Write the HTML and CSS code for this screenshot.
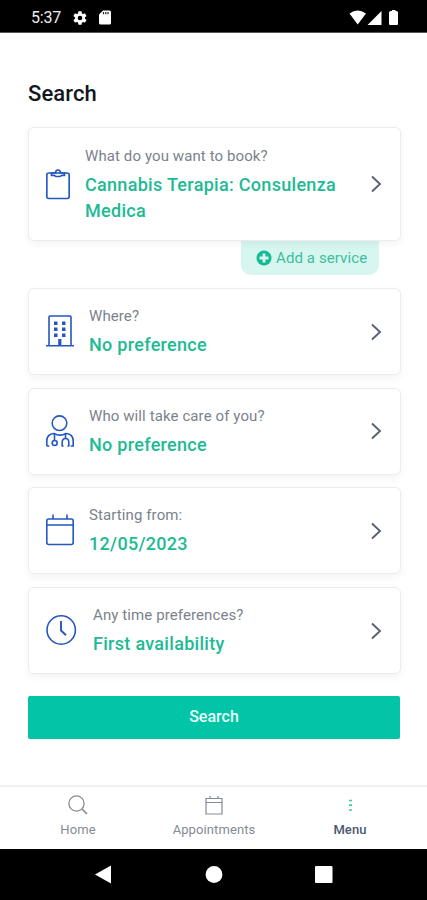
FILE: index.html
```html
<!DOCTYPE html>
<html lang="en">
<head>
<meta charset="utf-8">
<meta name="viewport" content="width=device-width">
<title>Search</title>
<link rel="stylesheet" href="styles.css">
</head>
<body>
<header class="status">
  <span class="time">5:37</span>
  <svg class="gear" width="16" height="16" viewBox="0 0 24 24"><path fill="#fff" d="M19.4 13c.1-.6.1-1.400 0-2l2.100-1.600c.2-.2.2-.4.100-.6l-2-3.500c-.1-.2-.4-.3-.6-.2l-2.500 1c-.5-.4-1.100-.7-1.700-1l-.4-2.600c0-.3-.2-.5-.4-.5h-4c-.3 0-.5.2-.5.4l-.4 2.700c-.6.2-1.100.6-1.700 1l-2.500-1c-.2-.1-.5 0-.6.2l-2 3.500c-.1.200-.1.400.100.600L4.500 11c-.1.600-.1 1.400 0 2l-2.100 1.600c-.2.200-.2.400-.1.600l2 3.500c.1.200.4.300.6.200l2.500-1c.5.400 1.100.7 1.700 1l.4 2.600c0 .3.200.5.500.5h4c.2 0 .4-.2.400-.4l.4-2.700c.6-.2 1.200-.6 1.700-1l2.500 1c.2.100.5 0 .6-.2l2-3.500c.1-.2.100-.4-.1-.6zM12 15.500a3.500 3.500 0 1 1 0-7 3.500 3.500 0 0 1 0 7z"/></svg>
  <svg class="sd" width="12" height="15" viewBox="0 0 12 15"><path fill="#fff" d="M4 .5h6.500Q12 .5 12 2v11q0 1.500-1.500 1.500h-9Q0 14.500 0 13V4.500z"/><path stroke="#222" stroke-width="1.200" d="M4.500 2v2.200M6.800 2v2.200M9 2v2.200"/></svg>
  <svg class="signals" width="50" height="17" viewBox="0 0 50 17"><path fill="#fff" d="M.5 4.500Q8.500-1.500 17 4.500L8.700 15.500zM32.500 2v14H18.500zM41.500 2h1.500V1h3.500v1H48q1 .5 1 1.500V15q0 1-1 1h-7q-1 0-1-1V3.500q0-1 1.500-1.500z"/></svg>
</header>
<main class="content">
  <h1>Search</h1>
  <section class="card card-service">
    <svg class="icon icon-clip" width="24" height="32" viewBox="0 0 24 32" fill="none" stroke="#2457c0" stroke-width="1.700"><rect x=".8" y="5" width="22.400" height="25.500" rx="2"/><path d="M5.500 5v2.300h2.500l2 1.200h4l2-1.200h2.500V5h-4q0-3-2.500-3T9.500 5z"/></svg>
    <div class="copy"><p class="label">What do you want to book?</p><p class="value">Cannabis Terapia: Consulenza Medica</p></div>
    <svg class="chevron" width="12" height="18" viewBox="0 0 12 18"><path d="M2 1.500 10 9 2 16.500"/></svg>
  </section>
  <button class="add"><svg width="16" height="16" viewBox="0 0 16 16"><circle cx="8" cy="8" r="7.500" fill="#16b994"/><path stroke="#d6f6ef" stroke-width="2.800" d="M8 3.500v9M3.500 8h9"/></svg><span>Add a service</span></button>
  <section class="card">
    <svg class="icon" width="28" height="32" viewBox="0 0 28 32" fill="none" stroke="#2457c0" stroke-width="1.600"><path d="M3 30.500V2q0-1 1-1h20q1 0 1 1v28.500M0 30.700h28"/><path stroke-width="3.400" d="M8 8.200h3.500M16 8.200h3.500M8 14.200h3.500M16 14.200h3.500M8 20.200h3.500M16 20.200h3.500"/><path stroke-width="3.200" d="M13.800 24v6"/></svg>
    <div class="copy"><p class="label">Where?</p><p class="value">No preference</p></div>
    <svg class="chevron" width="12" height="18" viewBox="0 0 12 18"><path d="M2 1.500 10 9 2 16.500"/></svg>
  </section>
  <section class="card">
    <svg class="icon" width="28" height="32" viewBox="0 0 28 32" fill="none" stroke="#2457c0" stroke-width="1.600"><circle cx="13.500" cy="8.200" r="7.300"/><path d="M.8 31v-5q0-7 7.200-7.500 6 3.200 12 0 7.200.5 7.200 7.500v5h-2.500M.8 31h2.500M8.500 19v6.500M19.500 19v4"/><circle cx="8.700" cy="28" r="2.500"/><path d="M17.500 31h-1.300v-3.500q0-4 3.300-4t3.300 4V31h-1.300"/></svg>
    <div class="copy"><p class="label">Who will take care of you?</p><p class="value">No preference</p></div>
    <svg class="chevron" width="12" height="18" viewBox="0 0 12 18"><path d="M2 1.500 10 9 2 16.500"/></svg>
  </section>
  <section class="card">
    <svg class="icon" width="28" height="32" viewBox="0 0 28 32" fill="none" stroke="#2457c0" stroke-width="1.600"><rect x=".8" y="5" width="26.400" height="25.500" rx="2"/><path d="M1 11h26M7 .5V5M21 .5V5"/></svg>
    <div class="copy"><p class="label">Starting from:</p><p class="value">12/05/2023</p></div>
    <svg class="chevron" width="12" height="18" viewBox="0 0 12 18"><path d="M2 1.500 10 9 2 16.500"/></svg>
  </section>
  <section class="card">
    <svg class="icon icon-clock" width="31" height="32" viewBox="0 0 31 32" fill="none" stroke="#2457c0" stroke-width="1.600"><circle cx="15.200" cy="16" r="14.200"/><path stroke-width="1.900" d="M15 7v9.500l5 4.700"/></svg>
    <div class="copy"><p class="label">Any time preferences?</p><p class="value">First availability</p></div>
    <svg class="chevron" width="12" height="18" viewBox="0 0 12 18"><path d="M2 1.500 10 9 2 16.500"/></svg>
  </section>
  <button class="submit">Search</button>
</main>
<nav class="tabs">
  <a class="tab"><svg width="20" height="20" viewBox="0 0 20 20" fill="none" stroke="#858b94" stroke-width="1.300"><circle cx="8.500" cy="8.500" r="7.600"/><path stroke-width="1.700" d="m14 14 5 5"/></svg><span>Home</span></a>
  <a class="tab"><svg width="20" height="20" viewBox="0 0 20 20" fill="none" stroke="#858b94" stroke-width="1.200"><path d="M2 3.500h16v15.500H2zM2 7.500h16M6 1v2.500M14 1v2.500"/></svg><span>Appointments</span></a>
  <a class="tab active"><svg width="20" height="20" viewBox="0 0 20 20"><path stroke="#3fc9a5" stroke-width="1.700" d="M9 5.500h3M9 10.200h3M9 15h3"/></svg><span>Menu</span></a>
</nav>
<footer class="system">
  <svg width="427" height="51" viewBox="0 0 427 51" fill="#fff"><path d="m95 25.500 16-9v18z"/><circle cx="214" cy="25.500" r="8.400"/><rect x="315" y="17" width="17.500" height="17" rx="1"/></svg>
</footer>
</body>
</html>
```
FILE: styles.css
```css
* { box-sizing: border-box; }
body {
  margin: 0;
  height: 900px;
  display: flex;
  flex-direction: column;
  overflow: hidden;
  background: #fff;
  font-family: Roboto, sans-serif;
}
h1, p { margin: 0; }
svg { display: block; flex: none; }
button { border: 0; font-family: inherit; }
.status {
  height: 33px;
  padding: 3px 28px 0 31px;
  display: flex;
  align-items: center;
  background: #000;
  border-bottom: 1px solid #555;
  color: #eee;
}
.time { width: 41px; font-size: 16px; font-weight: 400; letter-spacing: -.2px; }
.sd { margin-left: 11px; }
.signals { margin-left: auto; }
.content { flex: 1; padding: 47px 26px 0 28px; }
h1 {
  height: 47px;
  font-size: 22px;
  line-height: 28px;
  font-weight: 500;
  letter-spacing: .1px;
  color: #12171d;
}
.card {
  position: relative;
  height: 87px;
  margin-bottom: 12.700px;
  padding: 0 18px 0 17px;
  display: flex;
  align-items: center;
  background: #fff;
  border: 1px solid #ececee;
  border-radius: 6px;
  box-shadow: 0 3px 8px rgba(0, 0, 0, .05);
}
.card-service { height: 114px; margin-bottom: 0; }
.icon { margin-bottom: 1px; }
.copy { flex: 1; margin-left: 15px; padding-bottom: 2px; }
.label { font-size: 15px; line-height: 26px; letter-spacing: .1px; color: #7b828c; }
.value { font-size: 18px; line-height: 26px; padding-top: 3px; font-weight: 500; letter-spacing: .3px; color: #1dba94; }
.card-service .value { width: 270px; }
.icon-clock + .copy { margin-left: 16px; }
.chevron path { fill: none; stroke: #566274; stroke-width: 1.900; }
.add {
  width: 138px;
  height: 34px;
  margin: 0 0 13px 213px;
  padding: 0 0 0 15px;
  display: flex;
  align-items: center;
  gap: 4px;
  background: #d6f6ef;
  border-radius: 0 0 10px 10px;
  color: #40bea0;
  font-size: 15px;
  letter-spacing: .1px;
}
.submit {
  width: 372px;
  height: 43px;
  margin-top: 9px;
  padding-bottom: 3px;
  border-radius: 2px;
  background: #02c4a7;
  color: #e9fffb;
  font-size: 16px;
  font-weight: 500;
}
.tabs {
  height: 64px;
  padding: 0 9px 0 10px;
  display: grid;
  grid-template-columns: repeat(3, 1fr);
  border-top: 2px solid #f0f0f1;
}
.tab {
  padding-top: 8px;
  display: flex;
  flex-direction: column;
  align-items: center;
  font-size: 13px;
  line-height: 18px;
  letter-spacing: .1px;
  color: #858b94;
}
.tab span { margin-top: 6px; }
.active { color: #4b5870; font-weight: 500; }
.system { height: 51px; background: #000; }
```
